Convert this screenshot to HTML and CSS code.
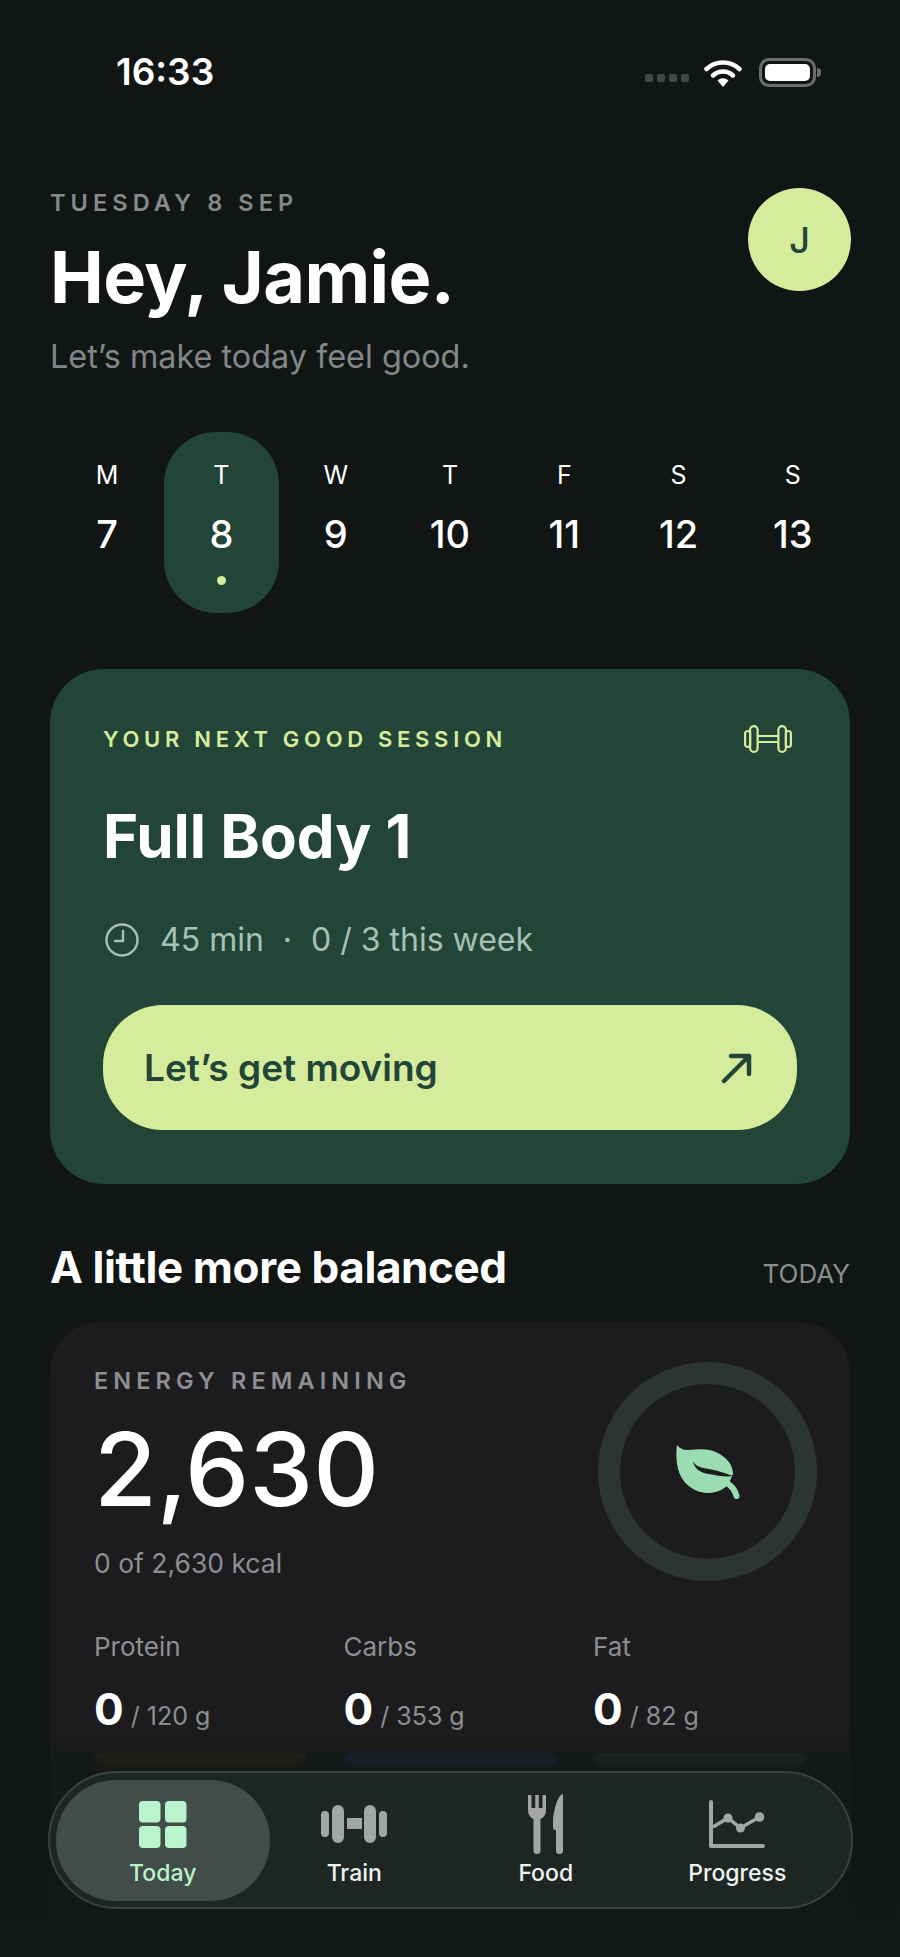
FILE: index.html
```html
<!DOCTYPE html>
<html>
<head>
  <title>Today</title>
  <link rel="stylesheet" href="styles.css">
</head>
<body>
  <div class="screen">

    <!-- Status bar -->
    <div class="status-bar">
      <span class="time">16:33</span>
      <div class="status-icons">
        <div class="signal"><i></i><i></i><i></i><i></i></div>
        <svg class="wifi" viewBox="0 0 38 29" width="38" height="29">
          <path d="M2.500 11A24 24 0 0 1 35.500 11" fill="none" stroke="#fff" stroke-width="4.500" stroke-linecap="round"/>
          <path d="M9 17.500A14.500 14.500 0 0 1 29 17.500" fill="none" stroke="#fff" stroke-width="4.500" stroke-linecap="round"/>
          <path d="M13.500 22.500L19 29L24.500 22.500A8 8 0 0 0 13.500 22.500Z" fill="#fff"/>
        </svg>
        <div class="battery"><div class="battery-fill"></div></div>
        <div class="battery-nub"></div>
      </div>
    </div>

    <main class="content">
      <!-- Greeting -->
      <header class="greeting">
        <div>
          <p class="date">TUESDAY 8 SEP</p>
          <h1>Hey, Jamie.</h1>
          <p class="subtitle">Let’s make today feel good.</p>
        </div>
        <div class="avatar">J</div>
      </header>

      <!-- Week strip -->
      <div class="week">
        <div class="day"><span class="day-letter">M</span><span class="day-num">7</span></div>
        <div class="day active"><span class="day-letter">T</span><span class="day-num">8</span><span class="day-dot"></span></div>
        <div class="day"><span class="day-letter">W</span><span class="day-num">9</span></div>
        <div class="day"><span class="day-letter">T</span><span class="day-num">10</span></div>
        <div class="day"><span class="day-letter">F</span><span class="day-num">11</span></div>
        <div class="day"><span class="day-letter">S</span><span class="day-num">12</span></div>
        <div class="day"><span class="day-letter">S</span><span class="day-num">13</span></div>
      </div>

      <!-- Session card -->
      <section class="session-card">
        <div class="session-top">
          <span class="session-label">YOUR NEXT GOOD SESSION</span>
          <svg viewBox="0 0 48 28" width="48" height="28" fill="none" stroke="#d5ec9c" stroke-width="2.200">
            <rect x="1.100" y="6" width="5" height="16" rx="2.500"/>
            <rect x="6.100" y="1.100" width="7.500" height="25.800" rx="3.700"/>
            <rect x="34.400" y="1.100" width="7.500" height="25.800" rx="3.700"/>
            <rect x="41.900" y="6" width="5" height="16" rx="2.500"/>
            <path d="M13.600 11H34.400M13.600 17H34.400"/>
          </svg>
        </div>
        <h2 class="session-title">Full Body 1</h2>
        <div class="session-meta">
          <svg viewBox="0 0 34 34" width="34" height="34" fill="none" stroke="#a9c0b4" stroke-width="2.400" stroke-linecap="round" stroke-linejoin="round">
            <circle cx="17" cy="17" r="15.500"/>
            <path d="M18 8V18H10"/>
          </svg>
          <span>45 min</span>
          <span class="meta-sep">·</span>
          <span>0 / 3 this week</span>
        </div>
        <button class="session-btn" type="button">
          <span>Let’s get moving</span>
          <svg viewBox="0 0 32 32" width="32" height="32" fill="none" stroke="#224538" stroke-width="4.500" stroke-linecap="round" stroke-linejoin="round">
            <path d="M3 29L28 4M10 4H28V22"/>
          </svg>
        </button>
      </section>

      <!-- Balance -->
      <div class="section-head">
        <h2>A little more balanced</h2>
        <span>TODAY</span>
      </div>

      <section class="energy-card">
        <div class="energy-top">
          <div>
            <p class="energy-label">ENERGY REMAINING</p>
            <p class="energy-value">2,630</p>
            <p class="energy-sub">0 of 2,630 kcal</p>
          </div>
          <div class="ring">
            <svg viewBox="0 0 66 56" width="66" height="56">
              <path d="M2 1C5 5 9 6.500 14 6C24 5 34 4 43 9C52 14 58 21 58 30L53 41C47 47 39 49 33 49C20 49 8 40 4 28C1 19 1 9 2 1Z" fill="#9bdcb3"/>
              <path d="M18 17C20 22 26 24 34 25C44 27 50 29 58 32C50 33 44 32 34 30C26 29 19 25 18 17Z" fill="#1c1c1e"/>
              <path d="M50 38C56 41 60 46 61.500 52" fill="none" stroke="#9bdcb3" stroke-width="6" stroke-linecap="round"/>
            </svg>
          </div>
        </div>
        <div class="macros">
          <div class="macro">
            <span class="macro-name">Protein</span>
            <p class="macro-value"><b>0</b> / 120 g</p>
            <div class="macro-bar bar-protein"></div>
          </div>
          <div class="macro">
            <span class="macro-name">Carbs</span>
            <p class="macro-value"><b>0</b> / 353 g</p>
            <div class="macro-bar bar-carbs"></div>
          </div>
          <div class="macro">
            <span class="macro-name">Fat</span>
            <p class="macro-value"><b>0</b> / 82 g</p>
            <div class="macro-bar bar-fat"></div>
          </div>
        </div>
      </section>
    </main>

    <!-- Fade behind the tab bar -->
    <div class="scrim"></div>

    <!-- Tab bar -->
    <nav class="tabbar">
      <div class="tab active">
        <div class="tab-icon">
          <svg viewBox="0 0 48 47" width="48" height="47" fill="#b9f4cd">
            <rect x="0" y="0" width="21.500" height="21.500" rx="4"/>
            <rect x="26" y="0" width="21.500" height="21.500" rx="4"/>
            <rect x="0" y="25" width="21.500" height="22" rx="4"/>
            <rect x="26" y="25" width="21.500" height="22" rx="4"/>
          </svg>
        </div>
        <span>Today</span>
      </div>
      <div class="tab">
        <div class="tab-icon">
          <svg viewBox="0 0 66 38" width="66" height="38" fill="#a3a6a5">
            <rect x="0" y="6" width="8" height="26" rx="4"/>
            <rect x="11" y="0" width="12" height="38" rx="6"/>
            <rect x="26" y="13" width="15" height="11"/>
            <rect x="43" y="0" width="12" height="38" rx="6"/>
            <rect x="58" y="6" width="8" height="26" rx="4"/>
          </svg>
        </div>
        <span>Train</span>
      </div>
      <div class="tab">
        <div class="tab-icon">
          <svg viewBox="0 0 36 60" width="36" height="60" fill="#a3a6a5">
            <path d="M0 1H3.500V14H7.250V1H10.750V14H14.500V1H18V16C18 21 15 24 12.500 25V56.500A3.500 3.500 0 0 1 5.500 56.500V25C3 24 0 21 0 16Z"/>
            <path d="M35 0V56.500A3.500 3.500 0 0 1 28 56.500V36H27C25 36 25 33 25 30C25 16 30 3 33 1C34 0 35 0 35 0Z"/>
          </svg>
        </div>
        <span>Food</span>
      </div>
      <div class="tab">
        <div class="tab-icon">
          <svg viewBox="0 0 56 48" width="56" height="48" fill="#a3a6a5">
            <path d="M2 2V46H54" fill="none" stroke="#a3a6a5" stroke-width="4" stroke-linecap="round" stroke-linejoin="round"/>
            <path d="M4 27L19 18L31.500 28L50.500 17" fill="none" stroke="#a3a6a5" stroke-width="3.500"/>
            <circle cx="19" cy="18" r="4.500"/>
            <circle cx="31.500" cy="28" r="4.500"/>
            <circle cx="50.500" cy="17" r="4.800"/>
          </svg>
        </div>
        <span>Progress</span>
      </div>
    </nav>
  </div>
</body>
</html>
```

FILE: styles.css
```css
* {
  box-sizing: border-box;
}

body {
  margin: 0;
  background-color: #111614;
  font-family: Inter, "Noto Sans", sans-serif;
  color: #fff;
}

p, h1, h2 {
  margin: 0;
}

.screen {
  position: relative;
  height: 1957px;
  overflow: hidden;
}

/* Status bar */
.status-bar {
  display: flex;
  justify-content: space-between;
  align-items: flex-start;
  height: 189px;
  padding: 52px 79px 0 116px;
}

.time {
  font-size: 37px;
  line-height: 40px;
  font-weight: 600;
}

.status-icons {
  display: flex;
  align-items: center;
  margin-top: 6px;
}

.signal {
  display: flex;
  gap: 4px;
  margin: 11px 15px 0 0;
}

.signal i {
  width: 8px;
  height: 8px;
  border-radius: 2px;
  background-color: #434645;
}

.wifi {
  margin-right: 17px;
}

.battery {
  width: 57px;
  height: 29px;
  padding: 3px;
  border: 3px solid #6c6e6e;
  border-radius: 10px;
}

.battery-fill {
  height: 100%;
  border-radius: 5px;
  background-color: #fff;
}

.battery-nub {
  width: 4px;
  height: 9px;
  margin-left: 1px;
  border-radius: 0 4px 4px 0;
  background-color: #6c6e6e;
}

/* Greeting */
.content {
  padding: 0 50px;
}

.greeting {
  display: flex;
  justify-content: space-between;
  align-items: flex-start;
}

.date {
  font-size: 23.500px;
  line-height: 28px;
  font-weight: 600;
  letter-spacing: 5.100px;
  color: #858a8c;
}

h1 {
  margin-top: 18px;
  font-size: 72px;
  line-height: 84px;
  font-weight: 700;
  letter-spacing: -0.600px;
}

.subtitle {
  margin-top: 18px;
  font-size: 32.400px;
  line-height: 40px;
  color: #82878a;
}

.avatar {
  display: flex;
  align-items: center;
  justify-content: center;
  width: 103px;
  height: 103px;
  margin: -1px -1px 0 0;
  border-radius: 50%;
  background-color: #d5ec9c;
  color: #224538;
  font-size: 36px;
  font-weight: 500;
}

/* Week */
.week {
  display: grid;
  grid-template-columns: repeat(7, 1fr);
  margin-top: 55px;
}

.day {
  display: flex;
  flex-direction: column;
  align-items: center;
  height: 181px;
  padding-top: 28px;
  border-radius: 52px;
}

.day.active {
  background-color: #224538;
}

.day-letter {
  font-size: 25px;
  line-height: 30px;
  font-weight: 400;
}

.day-num {
  margin-top: 21px;
  font-size: 38px;
  line-height: 46px;
  font-weight: 500;
}

.day-dot {
  width: 9px;
  height: 9px;
  margin-top: 19px;
  border-radius: 50%;
  background-color: #d5ec9c;
}

/* Session card */
.session-card {
  margin-top: 56px;
  height: 515px;
  padding: 56px 53px 0 53px;
  border-radius: 54px;
  background-color: #224538;
}

.session-top {
  display: flex;
  justify-content: space-between;
  align-items: center;
  padding-right: 5px;
}

.session-label {
  font-size: 22px;
  font-weight: 600;
  letter-spacing: 4.700px;
  color: #d5ec9c;
}

.session-title {
  margin-top: 47px;
  font-size: 60px;
  line-height: 72px;
  font-weight: 700;
}

.session-meta {
  display: flex;
  align-items: center;
  gap: 19px;
  margin-top: 48px;
  padding-left: 2px;
  font-size: 32px;
  line-height: 40px;
  color: #a9c0b4;
}

.session-meta svg {
  margin-right: 2px;
}

.session-btn {
  display: flex;
  justify-content: space-between;
  align-items: center;
  width: 694px;
  height: 125px;
  margin-top: 45px;
  padding: 0 44px 0 41px;
  border: none;
  border-radius: 60px;
  background-color: #d5ec9c;
  color: #224538;
  font-family: inherit;
  font-size: 37px;
  font-weight: 600;
}

/* Balance */
.section-head {
  display: flex;
  justify-content: space-between;
  align-items: baseline;
  margin-top: 58px;
}

.section-head h2 {
  font-size: 44px;
  line-height: 50px;
  font-weight: 700;
  letter-spacing: -0.400px;
}

.section-head span {
  font-size: 26px;
  color: #8a8f8c;
}

.energy-card {
  height: 640px;
  margin-top: 30px;
  padding: 45px 44px 0 44px;
  border-radius: 50px;
  background-color: #1c1c1e;
}

.energy-top {
  display: flex;
  justify-content: space-between;
  align-items: flex-start;
}

.energy-label {
  font-size: 23.500px;
  line-height: 28px;
  font-weight: 600;
  letter-spacing: 5.100px;
  color: #8e8e93;
}

.energy-value {
  margin-top: 14px;
  font-size: 102px;
  line-height: 120px;
  font-weight: 500;
}

.energy-sub {
  margin-top: 18px;
  font-size: 26.500px;
  line-height: 32px;
  color: #8e8e93;
}

.ring {
  display: flex;
  align-items: center;
  justify-content: center;
  width: 219px;
  height: 219px;
  margin: -5px -11px 0 0;
  padding: 0;
  border: 22px solid #2d3532;
  border-radius: 50%;
}

.macros {
  display: grid;
  grid-template-columns: repeat(3, 213px);
  gap: 36.500px;
  margin-top: 50px;
}

.macro-name {
  font-size: 26px;
  line-height: 32px;
  color: #8e8e93;
}

.macro-value {
  margin-top: 21px;
  font-size: 25px;
  line-height: 50px;
  color: #8e8e93;
}

.macro-value b {
  font-size: 44px;
  font-weight: 700;
  color: #fff;
}

.macro-bar {
  height: 12px;
  margin-top: 12px;
  border-radius: 6px;
}

.bar-protein {
  background-color: #33281f;
}

.bar-carbs {
  background-color: #232b40;
}

.bar-fat {
  background-color: #2c2c32;
}

/* Tab bar */
.scrim {
  position: absolute;
  left: 0;
  right: 0;
  top: 1722px;
  bottom: 0;
  background: linear-gradient(to bottom, rgba(17, 22, 20, 0) 0, rgba(17, 22, 20, 0.6) 36px, rgba(18, 24, 22, 0.96) 200px);
}

.tabbar {
  position: absolute;
  left: 48px;
  top: 1771px;
  display: grid;
  grid-template-columns: repeat(4, 191.500px);
  width: 805px;
  height: 138px;
  padding: 7px 0 7px 17px;
  border: 2px solid #36443f;
  border-radius: 69px;
  background-color: rgba(31, 40, 37, 0.88);
}

.tab {
  display: flex;
  flex-direction: column;
  align-items: center;
  height: 121px;
  font-size: 23px;
  font-weight: 500;
  color: #f0f2f1;
}

.tab-icon {
  display: flex;
  align-items: center;
  justify-content: center;
  height: 88px;
  margin-bottom: -10px;
}

.tab span {
  line-height: 30px;
}

.tab.active {
  margin: 0 -11px;
  border-radius: 60px;
  background-color: #424c49;
  color: #b9f4cd;
}
```
